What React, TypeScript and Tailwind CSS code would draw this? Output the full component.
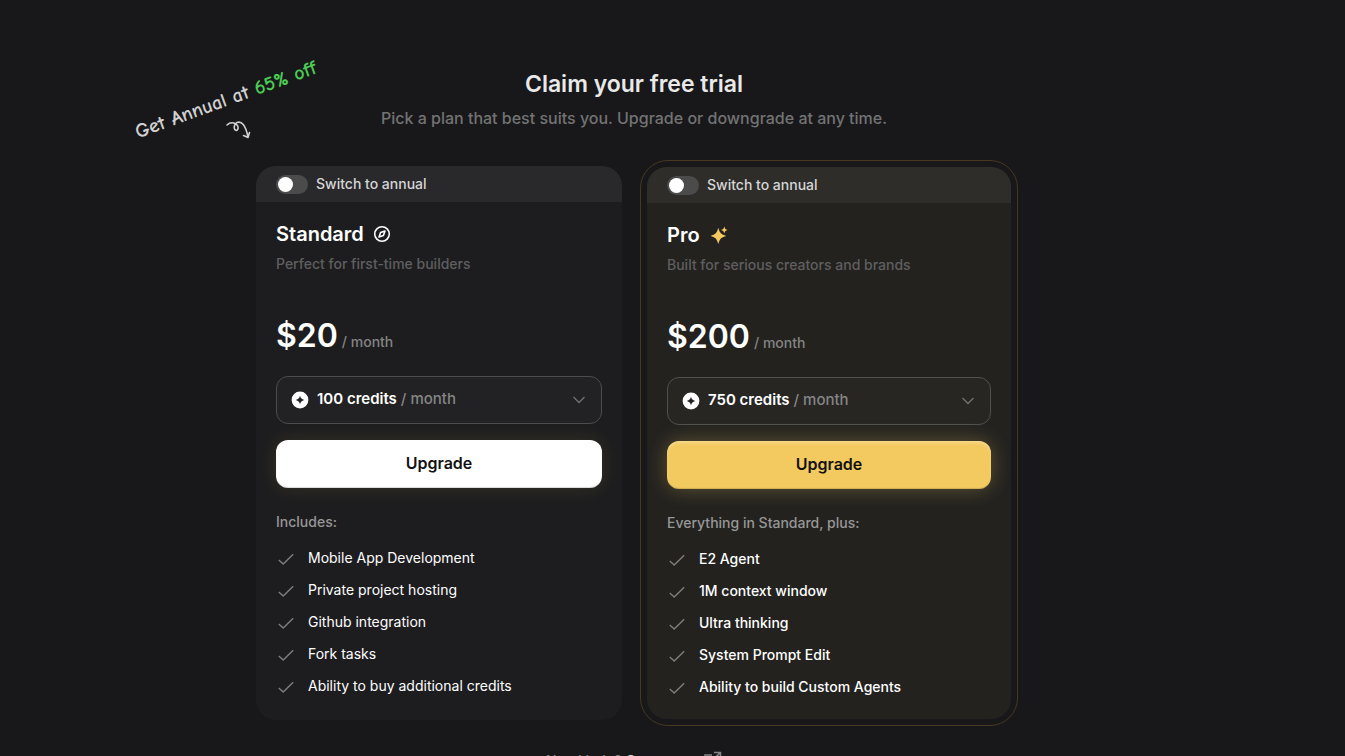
import { useState } from "react";

const PLANS = [
  {
    id: "standard",
    name: "Standard",
    tagline: "Perfect for first-time builders",
    monthly: 20,
    annual: 7,
    credits: "100",
    heading: "Includes:",
    features: [
      "Mobile App Development",
      "Private project hosting",
      "Github integration",
      "Fork tasks",
      "Ability to buy additional credits",
    ],
  },
  {
    id: "pro",
    name: "Pro",
    tagline: "Built for serious creators and brands",
    monthly: 200,
    annual: 70,
    credits: "750",
    heading: "Everything in Standard, plus:",
    features: [
      "E2 Agent",
      "1M context window",
      "Ultra thinking",
      "System Prompt Edit",
      "Ability to build Custom Agents",
    ],
  },
];

type Plan = (typeof PLANS)[number];

function CompassIcon() {
  return (
    <svg width="20" height="20" viewBox="0 0 20 20" fill="none" stroke="white" strokeWidth="1.6" strokeLinejoin="round">
      <circle cx="10" cy="10" r="7.3" />
      <path d="M13 7 11.4 11.4 7 13 8.6 8.6Z" />
    </svg>
  );
}

function SparkleIcon() {
  return (
    <svg width="20" height="20" viewBox="0 0 20 20" fill="#f3ca5f">
      <path d="M10.3 2.8C11.9 8.3 13 9.4 18.3 10.9 13 12.4 11.9 13.5 10.3 19 8.7 13.5 7.6 12.4 2.5 10.9 7.600 9.400 8.700 8.300 10.300 2.800Z" />
      <path d="M16.300 1.600C17 4 17.400 4.400 19.600 5 17.400 5.600 17 6 16.300 8.400 15.600 6 15.200 5.600 13 5 15.200 4.400 15.600 4 16.300 1.600Z" />
    </svg>
  );
}

function CreditIcon() {
  return (
    <svg width="18" height="18" viewBox="0 0 18 18">
      <circle cx="9" cy="9" r="8.4" fill="white" />
      <path d="M9 4.8C9.8 7.4 10.6 8.2 13.2 9 10.6 9.8 9.8 10.6 9 13.2 8.2 10.6 7.4 9.8 4.8 9 7.4 8.2 8.2 7.4 9 4.8Z" fill="#222224" />
    </svg>
  );
}

function CheckIcon() {
  return (
    <svg width="20" height="20" viewBox="0 0 20 20" fill="none" stroke="#7c7c7c" strokeWidth="1.5">
      <path d="M2.8 12 7.2 16 17.2 6.2" />
    </svg>
  );
}

function PlanCard({ plan }: { plan: Plan }) {
  const [annual, setAnnual] = useState(false);
  const pro = plan.id === "pro";

  return (
    <div className={`rounded-[28px] p-1.5 ${pro ? "border border-[#453922]" : ""}`}>
      <div className={`h-full overflow-hidden rounded-[20px] ${pro ? "bg-[#23221f]" : "bg-[#1d1d1f]"}`}>
        {/* Billing switch */}
        <label className={`flex h-9 cursor-pointer items-center gap-2 px-5 ${pro ? "bg-[#2e2d2a]" : "bg-[#29292b]"}`}>
          <input
            type="checkbox"
            role="switch"
            checked={annual}
            onChange={(e) => setAnnual(e.target.checked)}
            className="peer sr-only"
          />
          <span className="flex h-[19px] w-8 items-center rounded-full bg-[#4b4b4b] px-0.5 peer-checked:justify-end peer-checked:bg-[#f3ca5f]">
            <span className="size-[15px] rounded-full bg-white" />
          </span>
          <span className="text-sm leading-5 font-medium text-[#d6d6d6]">Switch to annual</span>
        </label>

        <div className="px-5 pt-[18px] pb-[22px]">
          <div className="flex items-center gap-2">
            <h2 className="text-xl leading-7 font-semibold text-white">{plan.name}</h2>
            {pro ? <SparkleIcon /> : <CompassIcon />}
          </div>
          <p className="mt-1.5 text-sm leading-5 font-medium text-[#5f5f5f]">{plan.tagline}</p>

          {/* Price */}
          <div className="mt-10 flex items-baseline gap-1">
            <span className="text-[32px] leading-[44px] font-semibold text-white">
              ${annual ? plan.annual : plan.monthly}
            </span>
            <span className="text-sm font-medium text-[#858585]">/ month</span>
          </div>

          <button
            type="button"
            className={`mt-[18px] flex h-12 w-full cursor-pointer items-center gap-2 rounded-xl border px-3.5 ${
              pro ? "border-[#51504d] bg-[#272623]" : "border-[#4c4c4e] bg-[#222224]"
            }`}
          >
            <CreditIcon />
            <span className="flex-1 pb-0.5 text-left text-[15px] leading-5 font-medium text-[#858585]">
              <span className="font-semibold text-white">{plan.credits} credits</span> / month
            </span>
            <svg width="16" height="16" viewBox="0 0 16 16" fill="none" stroke="#727272" strokeWidth="1.3">
              <path d="M2.5 5 8 10.5 13.5 5" />
            </svg>
          </button>

          <button
            type="button"
            className={`mt-4 h-12 w-full cursor-pointer rounded-xl pb-0.5 text-base font-semibold text-[#111113] ${
              pro
                ? "bg-[#f3ca5f] shadow-[0_0_20px_rgba(243,202,95,0.3),inset_0_2px_3px_rgba(255,255,255,0.3),inset_0_-1px_1px_rgba(0,0,0,0.15)]"
                : "bg-white shadow-[0_0_20px_rgba(243,202,95,0.12),inset_0_-1px_1px_rgba(0,0,0,0.16)]"
            }`}
          >
            Upgrade
          </button>

          <p className="mt-6 text-sm leading-5 font-medium text-[#979797]">{plan.heading}</p>
          <ul className={`mt-4 flex flex-col gap-3 text-sm leading-5 text-white ${pro ? "font-medium" : "font-normal"}`}>
            {plan.features.map((feature) => (
              <li key={feature} className="flex items-center gap-3">
                <CheckIcon />
                {feature}
              </li>
            ))}
          </ul>
        </div>
      </div>
    </div>
  );
}

export default function App() {
  return (
    <div className="h-screen overflow-hidden bg-[#18181a] pt-16 pr-[77px] font-['Inter',sans-serif]">
      <div className="relative mx-auto max-w-3xl">
        <header className="text-center">
          <h1 className="text-[23px] leading-10 font-semibold text-[#e9e9e9]">Claim your free trial</h1>
          <p className="mt-0.5 text-base leading-6 font-medium text-[#737373]">
            Pick a plan that best suits you. Upgrade or downgrade at any time.
          </p>
        </header>

        {/* Handwritten note pointing at the switch */}
        <div className="absolute top-6 -left-[124px] w-[200px] -rotate-[20deg] text-center text-xl leading-6 font-bold whitespace-nowrap text-[#d0d0d0] font-['Comic_Neue','Comic_Sans_MS',cursive]">
          Get Annual at <span className="text-[#4ccb52]">65% off</span>
        </div>
        <svg className="absolute top-14 -left-6" width="26" height="20" viewBox="0 0 26 20" fill="none" stroke="#d0d0d0" strokeWidth="1.6" strokeLinecap="round" strokeLinejoin="round">
          <path d="M1 5C4 2 9 2 11.5 5.5 12.8 8.5 11.5 10.8 9.8 10.2 7.5 9.5 7.5 4.5 11 2.5 15.5 .8 19.5 5 22 17M17.5 15.5 22 17.5 23.5 12.5" />
        </svg>

        <main className="mt-[30px] grid grid-cols-2 gap-3">
          {PLANS.map((plan) => (
            <PlanCard key={plan.id} plan={plan} />
          ))}
        </main>

        <a href="#" className="mt-6 flex items-start justify-center gap-1 text-sm leading-[22px] font-medium text-[#858585]">
          <span>
            Need help? <span className="text-[#d6d6d6]">Contact us</span>
          </span>
          <svg width="20" height="18" viewBox="0 0 20 18" fill="none" stroke="#858585" strokeWidth="1.5">
            <path d="M10 5H3v12h12V10M12 2.500h6.500V9M18.500 2.500 9.500 11" />
          </svg>
        </a>
      </div>
    </div>
  );
}
